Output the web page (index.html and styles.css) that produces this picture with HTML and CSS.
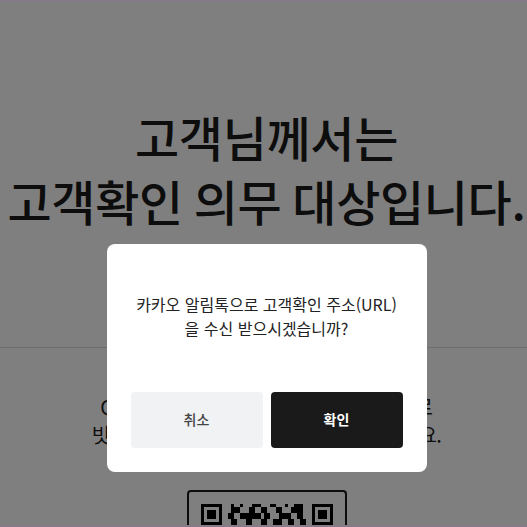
FILE: index.html
```html
<!DOCTYPE html>
<html lang="ko">
<head>
<meta charset="utf-8">
<title>고객확인</title>
<link rel="stylesheet" href="styles.css">
</head>
<body>
<main class="page">
  <h1 class="title">고객님께서는<br>고객확인 의무 대상입니다.</h1>
  <hr class="rule">
  <p class="desc">QR코드를 휴대폰으로 스캔하여 모바일로<br><span class="desc-tight">빗썸 앱에서 고객확인 절차를 진행해 주세요.</span></p>
  <div class="qr-box">
    <svg class="qr" viewBox="0 0 44 8" shape-rendering="crispEdges">
      <path d="M0 0h7v7h-7zM1 1v5h5v-5zM2 2h3v3h-3z" fill-rule="evenodd"/>
      <path d="M37 0h7v7h-7zM38 1v5h5v-5zM39 2h3v3h-3z" fill-rule="evenodd"/>
      <path d="M10 0h1v1h-1zM13 0h1v1h-1zM17 0h3v1h-3zM23 0h2v1h-2zM28 0h1v1h-1zM31 0h3v1h-3z"/>
      <path d="M10 1h3v2h-3zM16 1h2v2h-2zM20 1h2v2h-2zM25 1h2v2h-2zM30 1h4v2h-4z"/>
      <path d="M9 3h2v2h-2zM13 3h7v2h-7zM21 3h2v2h-2zM26 3h4v2h-4zM32 3h2v2h-2z"/>
      <path d="M10 5h2v2h-2zM15 5h2v2h-2zM20 5h2v2h-2zM24 5h3v2h-3zM29 5h2v2h-2zM33 5h2v2h-2z"/>
      <path d="M8 7h2v1h-2zM12 7h1v1h-1zM15 7h1v1h-1zM19 7h1v1h-1zM22 7h3v1h-3zM28 7h1v1h-1zM31 7h2v1h-2z"/>
    </svg>
  </div>
</main>
<div class="overlay">
  <section class="dialog">
    <p class="message">카카오 알림톡으로 고객확인 주소(URL)<br>을 수신 받으시겠습니까?</p>
    <div class="actions">
      <button class="btn btn-cancel">취소</button>
      <button class="btn btn-ok">확인</button>
    </div>
  </section>
</div>
<div class="edge edge-top"></div>
<div class="edge edge-bottom"></div>
</body>
</html>
```
FILE: styles.css
```css
* { box-sizing: border-box; }
html, body { margin: 0; height: 100%; overflow: hidden; }
body {
  background: #fff;
  color: #1a1a1a;
  font-family: "Noto Sans CJK KR", "Noto Sans", sans-serif;
}
.page { width: 533px; height: 527px; overflow: hidden; display: flex; flex-direction: column; align-items: center; padding-top: 104px; }
.title {
  margin: 0;
  font-size: 48px;
  line-height: 64px;
  font-weight: 500;
  letter-spacing: -.33px;
  word-spacing: -2.2px;
  text-align: center;
  white-space: nowrap;
  flex: none;
}
.rule { width: 100%; height: 1px; margin: 115px 0 0; border: 0; background: #ddd; flex: none; }
.desc {
  margin: 45px 0 0;
  font-size: 20px;
  line-height: 28px;
  letter-spacing: -.3px;
  text-align: center;
  white-space: nowrap;
  flex: none;
}
.desc-tight { letter-spacing: -.63px; }
.qr-box {
  margin-top: 41px;
  width: 160px;
  height: 37px;
  flex: none;
  padding: 12px 12px 0;
  border: 2px solid #1a1a1a;
  border-bottom: 0;
  border-radius: 4px 4px 0 0;
}
.qr { display: block; width: 132px; height: 24px; }
.overlay {
  position: fixed;
  top: 0;
  left: 0;
  width: 533px;
  height: 100%;
  display: flex;
  align-items: flex-start;
  justify-content: center;
  background: rgba(0, 0, 0, .5);
  padding-top: 244px;
}
.dialog {
  width: 320px;
  height: 228px;
  padding: 48px 24px 24px;
  display: flex;
  flex-direction: column;
  background: #fff;
  border-radius: 8px;
}
.message {
  margin: 0;
  font-size: 16px;
  line-height: 24px;
  text-align: center;
  color: #222;
}
.actions { margin-top: auto; display: flex; gap: 8px; }
.btn {
  flex: 1;
  height: 56px;
  border: 0;
  border-radius: 4px;
  padding: 0 0 2px;
  font: 500 14px/20px "Noto Sans CJK KR", sans-serif;
}
.btn-cancel { background: #f1f2f4; color: #444; }
.btn-ok { background: #1a1a1a; color: #fff; font-weight: 700; }
.edge { position: fixed; left: 0; right: 0; height: 2px; background: #857a87; }
.edge-top { top: 0; }
.edge-bottom { bottom: 0; }
```
